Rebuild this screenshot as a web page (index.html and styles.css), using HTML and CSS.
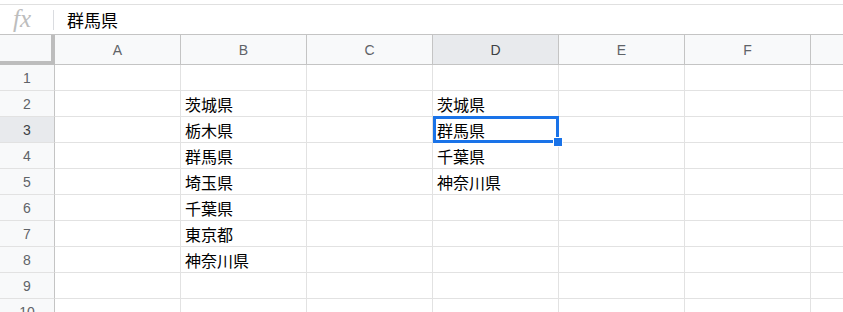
FILE: index.html
```html
<!DOCTYPE html>
<html lang="ja">
  <head>
    <meta charset="UTF-8" />
    <meta name="viewport" content="width=device-width, initial-scale=1.0" />
    <title>シート</title>
    <link rel="stylesheet" href="styles.css">
  </head>
  <body>
    <div class="toolbar-edge"></div>

    <!-- 数式バー -->
    <div class="formula-bar">
      <span class="fx">fx</span>
      <span class="fx-sep"></span>
      <span class="formula-text">群馬県</span>
    </div>

    <!-- シート -->
    <div class="sheet">
      <div class="row head-row">
        <div class="corner"></div>
        <div class="col-head">A</div>
        <div class="col-head">B</div>
        <div class="col-head">C</div>
        <div class="col-head active">D</div>
        <div class="col-head">E</div>
        <div class="col-head">F</div>
        <div class="col-head last"></div>
      </div>

      <div class="row">
        <div class="row-head">1</div>
        <div class="cell"></div><div class="cell"></div><div class="cell"></div>
        <div class="cell"></div><div class="cell"></div><div class="cell"></div><div class="cell last"></div>
      </div>
      <div class="row">
        <div class="row-head">2</div>
        <div class="cell"></div><div class="cell">茨城県</div><div class="cell"></div>
        <div class="cell">茨城県</div><div class="cell"></div><div class="cell"></div><div class="cell last"></div>
      </div>
      <div class="row">
        <div class="row-head active">3</div>
        <div class="cell"></div><div class="cell">栃木県</div><div class="cell"></div>
        <div class="cell selected">群馬県<span class="sel"></span><span class="handle"></span></div>
        <div class="cell"></div><div class="cell"></div><div class="cell last"></div>
      </div>
      <div class="row">
        <div class="row-head">4</div>
        <div class="cell"></div><div class="cell">群馬県</div><div class="cell"></div>
        <div class="cell">千葉県</div><div class="cell"></div><div class="cell"></div><div class="cell last"></div>
      </div>
      <div class="row">
        <div class="row-head">5</div>
        <div class="cell"></div><div class="cell">埼玉県</div><div class="cell"></div>
        <div class="cell">神奈川県</div><div class="cell"></div><div class="cell"></div><div class="cell last"></div>
      </div>
      <div class="row">
        <div class="row-head">6</div>
        <div class="cell"></div><div class="cell">千葉県</div><div class="cell"></div>
        <div class="cell"></div><div class="cell"></div><div class="cell"></div><div class="cell last"></div>
      </div>
      <div class="row">
        <div class="row-head">7</div>
        <div class="cell"></div><div class="cell">東京都</div><div class="cell"></div>
        <div class="cell"></div><div class="cell"></div><div class="cell"></div><div class="cell last"></div>
      </div>
      <div class="row">
        <div class="row-head">8</div>
        <div class="cell"></div><div class="cell">神奈川県</div><div class="cell"></div>
        <div class="cell"></div><div class="cell"></div><div class="cell"></div><div class="cell last"></div>
      </div>
      <div class="row">
        <div class="row-head">9</div>
        <div class="cell"></div><div class="cell"></div><div class="cell"></div>
        <div class="cell"></div><div class="cell"></div><div class="cell"></div><div class="cell last"></div>
      </div>
      <div class="row">
        <div class="row-head">10</div>
        <div class="cell"></div><div class="cell"></div><div class="cell"></div>
        <div class="cell"></div><div class="cell"></div><div class="cell"></div><div class="cell last"></div>
      </div>
    </div>
  </body>
</html>
```

FILE: styles.css
```css
* {
  box-sizing: border-box;
  margin: 0;
  padding: 0;
}

body {
  font-family: "Liberation Sans", "Noto Sans CJK JP", sans-serif;
  background-color: #fff;
  color: #000;
  overflow: hidden;
}

.toolbar-edge {
  height: 4px;
}

/* 数式バー */
.formula-bar {
  height: 31px;
  border-top: 1px solid #e0e0e0;
  border-bottom: 1px solid #c4c4c4;
  display: flex;
  align-items: center;
}

.fx {
  width: 52px;
  padding-left: 13px;
  font-family: "Liberation Serif", serif;
  font-style: italic;
  font-size: 25px;
  color: #bdbdbd;
  line-height: 1;
  margin-top: -3px;
}

.fx-sep {
  width: 1px;
  height: 20px;
  background-color: #dadce0;
  margin-left: 1px;
}

.formula-text {
  margin-left: 13px;
  font-size: 17px;
  color: #000;
}

/* シート */
.row {
  display: grid;
  grid-template-columns: 55px repeat(6, 126px) 1fr;
  height: 26px;
}

.head-row {
  height: 30px;
}

.corner {
  background-color: #f8f9fa;
  border-right: 4px solid #bdbdbd;
  border-bottom: 4px solid #bdbdbd;
}

.col-head,
.row-head {
  background-color: #f8f9fa;
  color: #5f6368;
  font-size: 14px;
  display: flex;
  align-items: center;
  justify-content: center;
}

.col-head {
  border-right: 1px solid #c4c4c4;
  border-bottom: 1px solid #c4c4c4;
}

.row-head {
  border-right: 1px solid #c4c4c4;
  border-bottom: 1px solid #e2e2e2;
}

.col-head.active,
.row-head.active {
  background-color: #e8eaed;
  color: #3c4043;
}

.cell {
  border-right: 1px solid #e2e2e2;
  border-bottom: 1px solid #e2e2e2;
  font-size: 16px;
  padding-left: 4px;
  display: flex;
  align-items: center;
  white-space: nowrap;
}

.last {
  border-right: none;
}

.selected {
  position: relative;
}

.sel {
  position: absolute;
  top: -1px;
  left: 0;
  right: -1px;
  bottom: -1px;
  border: 3px solid #1a73e8;
}

.handle {
  position: absolute;
  right: -5px;
  bottom: -5px;
  width: 10px;
  height: 10px;
  background-color: #1a73e8;
  border: 1px solid #fff;
}
```
